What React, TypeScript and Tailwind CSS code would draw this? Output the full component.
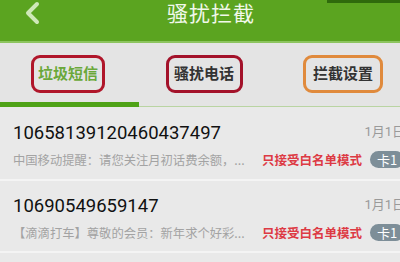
import React from 'react'

interface Msg {
  id: string;
  sender: string;
  preview: string;
  date: string;
}

const msgs: Msg[] = [
  { id: '1', sender: '10658139120460437497', preview: '中国移动提醒：请您关注月初话费余额，...', date: '1月1日' },
  { id: '2', sender: '10690549659147', preview: '【滴滴打车】尊敬的会员：新年求个好彩...', date: '1月1日' },
]

const tabs = [
  { label: '垃圾短信', active: true, border: 'border-[#b0162a]', w: 'w-[74px]' },
  { label: '骚扰电话', active: false, border: 'border-[#a3122a]', w: 'w-[77px]' },
  { label: '拦截设置', active: false, border: 'border-[#e08a3c]', w: 'w-[80px]' },
]

const App = () => {
  return (
    <div className="relative w-[400px] h-[262px] overflow-hidden bg-[#e9e9e9] font-['Roboto','Noto_Sans_CJK_SC',sans-serif]">
      <div className="absolute right-0 top-0 h-[3px] w-[73px] bg-[#2f6a0c]" />
      {/* header */}
      <div className="flex h-[43px] items-start border-b-2 border-[#8cc45e] bg-[#5ba420]">
        <svg width="18" height="24" viewBox="0 0 18 24" className="ml-[23px] mt-[1px]">
          <path d="M14 3 L5 12 L14 21" fill="none" stroke="#cfe8b8" strokeWidth="4" strokeLinecap="round" strokeLinejoin="round" />
        </svg>
        <div className="ml-[126px] mt-[-1px] text-[21px] leading-[26px] tracking-[1px] text-[#f1f8ea] font-['Noto_Sans_CJK_SC',sans-serif]">
          骚扰拦截
        </div>
      </div>

      {/* tabs */}
      <div className="flex h-[59px] items-center justify-between bg-[#e4e4e4] pl-[31px] pr-[17px] pt-[2px]">
        {tabs.map((t) => (
          <div
            key={t.label}
            className={`flex h-[38px] ${t.w} items-center justify-center rounded-[9px] border-[3px] ${t.border} text-[15px] font-bold font-['Noto_Sans_CJK_SC',sans-serif] ${t.active ? 'text-[#6aa83a]' : 'text-[#333333]'}`}
          >
            {t.label}
          </div>
        ))}
      </div>
      <div className="flex h-[5px] items-end bg-[#e4e4e4]">
        <div className="h-[5px] w-[139px] bg-[#4fa217]" />
        <div className="h-[1px] flex-1 bg-[#b9d4a2]" />
      </div>

      {/* list */}
      {msgs.map((m, i) => (
        <div key={m.id} className={`${i === 0 ? 'h-[74px]' : 'h-[72px]'} border-b-2 border-[#f4f4f4] pl-[13px]`}>
          <div className={`flex w-[420px] items-start justify-between ${i === 0 ? 'pt-[13px]' : 'pt-[12px]'}`}>
            <span className="text-[18.5px] leading-[26px] text-[#111111]">{m.sender}</span>
            <span className="mr-[28px] mt-[2px] text-[13px] text-[#9a9a9a]">{m.date}</span>
          </div>
          <div className="mt-[5px] flex w-[420px] items-center font-['Noto_Sans_CJK_SC',sans-serif]">
            <span className="w-[249px] text-[12.3px] leading-[16px] text-[#a3a3a3]">{m.preview}</span>
            <span className="text-[12.5px] font-bold leading-[16px] text-[#dd3a44]">只接受白名单模式</span>
            <span className="ml-[8px] rounded-full bg-[#7d8e98] px-[7px] text-[13px] leading-[17px] text-white">卡1</span>
          </div>
        </div>
      ))}
    </div>
  )
}

export default App
